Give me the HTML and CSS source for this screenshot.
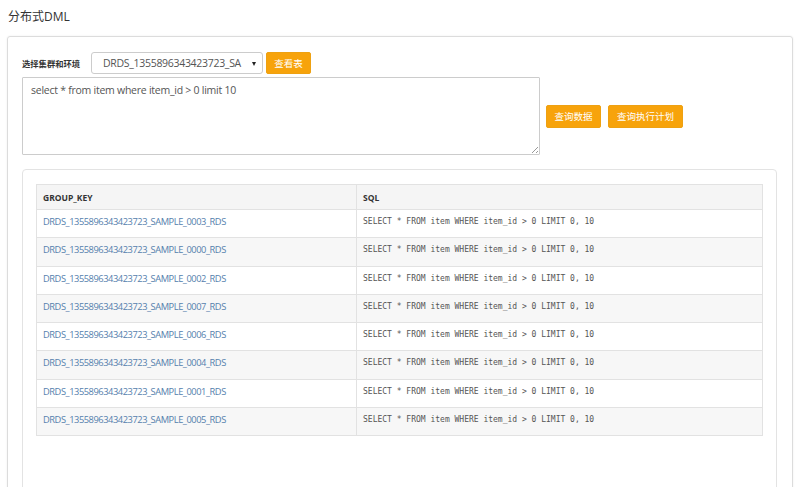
FILE: index.html
```html
<!DOCTYPE html>
<html>
<head>
<meta charset="utf-8">
<link rel="stylesheet" href="styles.css">
</head>
<body>
<h1 class="title">分布式DML</h1>
<div class="panel">
  <div class="row-top">
    <span class="label">选择集群和环境</span>
    <div class="select">
      <span class="select-text">DRDS_1355896343423723_SA</span>
      <span class="caret"></span>
    </div>
    <button class="btn btn-view">查看表</button>
  </div>
  <div class="row-query">
    <div class="textarea">select * from item where item_id &gt; 0 limit 10<span class="grip"></span></div>
    <button class="btn btn-data">查询数据</button>
    <button class="btn btn-plan">查询执行计划</button>
  </div>
  <div class="result">
    <table class="grid">
      <thead>
        <tr><th class="c1">GROUP_KEY</th><th>SQL</th></tr>
      </thead>
      <tbody>
        <tr><td class="c1"><a>DRDS_1355896343423723_SAMPLE_0003_RDS</a></td><td class="sql">SELECT * FROM item WHERE item_id &gt; 0 LIMIT 0, 10</td></tr>
        <tr><td class="c1"><a>DRDS_1355896343423723_SAMPLE_0000_RDS</a></td><td class="sql">SELECT * FROM item WHERE item_id &gt; 0 LIMIT 0, 10</td></tr>
        <tr><td class="c1"><a>DRDS_1355896343423723_SAMPLE_0002_RDS</a></td><td class="sql">SELECT * FROM item WHERE item_id &gt; 0 LIMIT 0, 10</td></tr>
        <tr><td class="c1"><a>DRDS_1355896343423723_SAMPLE_0007_RDS</a></td><td class="sql">SELECT * FROM item WHERE item_id &gt; 0 LIMIT 0, 10</td></tr>
        <tr><td class="c1"><a>DRDS_1355896343423723_SAMPLE_0006_RDS</a></td><td class="sql">SELECT * FROM item WHERE item_id &gt; 0 LIMIT 0, 10</td></tr>
        <tr><td class="c1"><a>DRDS_1355896343423723_SAMPLE_0004_RDS</a></td><td class="sql">SELECT * FROM item WHERE item_id &gt; 0 LIMIT 0, 10</td></tr>
        <tr><td class="c1"><a>DRDS_1355896343423723_SAMPLE_0001_RDS</a></td><td class="sql">SELECT * FROM item WHERE item_id &gt; 0 LIMIT 0, 10</td></tr>
        <tr><td class="c1"><a>DRDS_1355896343423723_SAMPLE_0005_RDS</a></td><td class="sql">SELECT * FROM item WHERE item_id &gt; 0 LIMIT 0, 10</td></tr>
      </tbody>
    </table>
  </div>
</div>
</body>
</html>
```
FILE: styles.css
```css
html, body {
  margin: 0;
  padding: 0;
  background: #fff;
  overflow: hidden;
  font-family: "Open Sans", "Noto Sans CJK SC", sans-serif;
  color: #333;
}
.title {
  margin: 0;
  padding: 8px 8px 0 8px;
  height: 28px;
  font-size: 12px;
  font-weight: normal;
  line-height: 18px;
  color: #333;
  box-sizing: border-box;
}
.panel {
  margin: 8px 7px 0 7px;
  border: 1px solid #dcdcdc;
  border-radius: 3px;
  box-shadow: 0 0 2px rgba(0,0,0,0.08);
  padding: 15px 14px 0 14px;
  height: 600px;
  box-sizing: border-box;
}
.row-top {
  display: flex;
  align-items: center;
  height: 22px;
}
.label {
  width: 69px;
  font-size: 8.3px;
  font-weight: bold;
  color: #333;
  white-space: nowrap;
}
.select {
  width: 172px;
  height: 22px;
  box-sizing: border-box;
  border: 1px solid #ccc;
  border-radius: 3px;
  display: flex;
  align-items: center;
  padding-left: 11px;
  position: relative;
}
.select-text {
  white-space: nowrap;
  font-size: 10.5px;
  letter-spacing: -0.3px;
  color: #555;
}
.caret {
  position: absolute;
  right: 6px;
  top: 9px;
  width: 0;
  height: 0;
  border-left: 2.5px solid transparent;
  border-right: 2.5px solid transparent;
  border-top: 4px solid #222;
}
.btn {
  background: #f7a30b;
  border: 1px solid #eea112;
  border-radius: 2px;
  color: #fff;
  font-family: "Noto Sans CJK SC", sans-serif;
  font-size: 9.5px;
  padding: 0;
  height: 23px;
  line-height: 21px;
  cursor: pointer;
}
.btn-view {
  margin-left: 3px;
  width: 45px;
  height: 22px;
}
.row-query {
  display: flex;
  align-items: center;
  margin-top: 3px;
}
.textarea {
  width: 518px;
  height: 78px;
  box-sizing: border-box;
  border: 1px solid #ccc;
  border-radius: 1px;
  padding: 4px 8px;
  font-size: 10.5px;
  letter-spacing: -0.25px;
  line-height: 16px;
  color: #555;
  position: relative;
}
.grip {
  position: absolute;
  right: 1px;
  bottom: 1px;
  width: 6px;
  height: 6px;
  background: linear-gradient(135deg, transparent 45%, #999 45%, #999 55%, transparent 55%, transparent 75%, #999 75%, #999 85%, transparent 85%);
}
.btn-data {
  margin-left: 6px;
  width: 55px;
}
.btn-plan {
  margin-left: 7px;
  width: 75px;
}
.result {
  margin-top: 14px;
  margin-right: 1px;
  border: 1px solid #e3e3e3;
  border-radius: 4px;
  padding: 14px 13px 0 13px;
  height: 400px;
  box-sizing: border-box;
}
.grid {
  width: 100%;
  border-collapse: collapse;
  font-size: 9.5px;
}
.grid th, .grid td {
  border: 1px solid #e2e2e2;
  text-align: left;
  padding: 0 6px;
  white-space: nowrap;
}
.grid th {
  height: 24px;
  background: #f5f5f5;
  font-weight: bold;
  color: #333;
  font-size: 8.5px;
}
.grid td {
  height: 28.25px;
  vertical-align: top;
  padding-top: 5px;
  box-sizing: border-box;
}
.grid tbody tr:nth-child(even) td {
  background: #f7f7f7;
}
.grid .c1 {
  width: 307px;
}
.grid a {
  color: #5580ad;
  font-size: 9.3px;
  letter-spacing: -0.45px;
  text-decoration: none;
}
.grid .sql {
  font-family: "DejaVu Sans Mono", monospace;
  font-size: 8px;
  color: #555;
  padding-top: 7px;
}
```
